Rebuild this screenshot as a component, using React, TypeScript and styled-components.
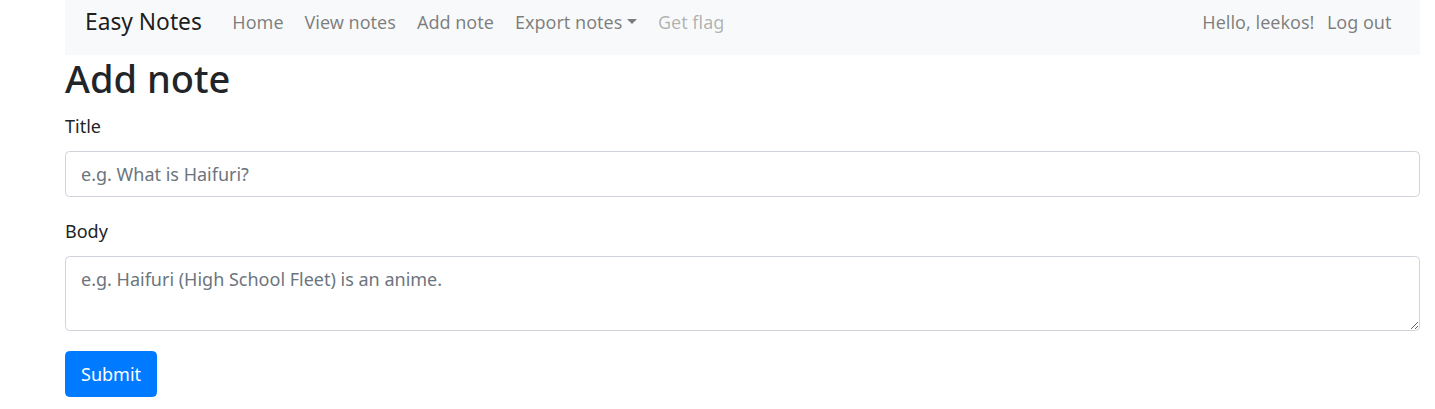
import React from "react";
import styled, { createGlobalStyle } from "styled-components";

const GlobalStyle = createGlobalStyle`
  html, body { margin: 0; padding: 0; background: #fff; }
  body {
    font-family: "Noto Sans", "Open Sans", "Liberation Sans", sans-serif;
    font-size: 18px;
    line-height: 1.5;
    color: #212529;
  }
  * { box-sizing: border-box; }
`;

const Container = styled.div`
  margin: 0 15px 0 65px;
`;

const Navbar = styled.nav`
  display: flex;
  align-items: center;
  height: 55px;
  padding: 0 18px 10px 20px;
  background: #f8f9fa;
`;

const Brand = styled.a`
  font-size: 22.75px;
  color: rgba(0, 0, 0, 0.9);
  margin-right: 20px;
  text-decoration: none;
  white-space: nowrap;
`;

const NavList = styled.div<{ $right?: boolean }>`
  display: flex;
  align-items: center;
  margin-left: ${(p) => (p.$right ? "auto" : "0")};
`;

const NavLink = styled.a<{ $disabled?: boolean }>`
  padding: 0 10.5px;
  color: ${(p) => (p.$disabled ? "rgba(0,0,0,0.3)" : "rgba(0,0,0,0.5)")};
  text-decoration: none;
  white-space: nowrap;
  font-size: 18px;
`;

const NavText = styled.span`
  color: rgba(0, 0, 0, 0.5);
  white-space: nowrap;
  font-size: 18px;
  padding-right: 2px;
`;

const Caret = styled.span`
  display: inline-block;
  margin-left: 4.6px;
  vertical-align: 4.6px;
  border-top: 5.4px solid;
  border-left: 5.2px solid transparent;
  border-right: 5.2px solid transparent;
`;

const Heading = styled.h1`
  margin: 0 0 12px;
  font-size: 38px;
  font-weight: 500;
  line-height: 46px;
`;

const FormGroup = styled.div`
  margin-bottom: 21px;
`;

const Label = styled.label`
  display: block;
  margin-bottom: 11px;
  font-size: 18px;
  line-height: 27px;
`;

const inputBase = `
  display: block;
  width: 100%;
  padding: 8.5px 15px;
  font-family: inherit;
  font-size: 18px;
  line-height: 27px;
  color: #495057;
  background: #fff;
  border: 1px solid #ced4da;
  border-radius: 4.5px;
  outline: none;
  &::placeholder { color: #6c757d; opacity: 1; }
`;

const Input = styled.input`
  ${inputBase}
  height: 46px;
`;

const TextArea = styled.textarea`
  ${inputBase}
  height: 75px;
  resize: vertical;
`;

const Button = styled.button`
  display: inline-block;
  margin-top: -1px;
  padding: 8.5px 15px;
  height: 46px;
  font-family: inherit;
  font-size: 18px;
  line-height: 27px;
  color: #fff;
  background: #007bff;
  border: 1px solid #007bff;
  border-radius: 4.5px;
  cursor: pointer;
`;

export default function App() {
  return (
    <>
      <GlobalStyle />
      <Container>
        <Navbar>
          <Brand href="#">Easy Notes</Brand>
          <NavList>
            <NavLink href="#">Home</NavLink>
            <NavLink href="#">View notes</NavLink>
            <NavLink href="#">Add note</NavLink>
            <NavLink href="#">
              Export notes
              <Caret />
            </NavLink>
            <NavLink $disabled href="#">Get flag</NavLink>
          </NavList>
          <NavList $right>
            <NavText>Hello, leekos!</NavText>
            <NavLink href="#">Log out</NavLink>
          </NavList>
        </Navbar>
        <Heading>Add note</Heading>
        <form>
          <FormGroup>
            <Label htmlFor="title">Title</Label>
            <Input id="title" placeholder="e.g. What is Haifuri?" />
          </FormGroup>
          <FormGroup>
            <Label htmlFor="body">Body</Label>
            <TextArea id="body" rows={2} placeholder="e.g. Haifuri (High School Fleet) is an anime." />
          </FormGroup>
          <Button type="submit">Submit</Button>
        </form>
      </Container>
    </>
  );
}
